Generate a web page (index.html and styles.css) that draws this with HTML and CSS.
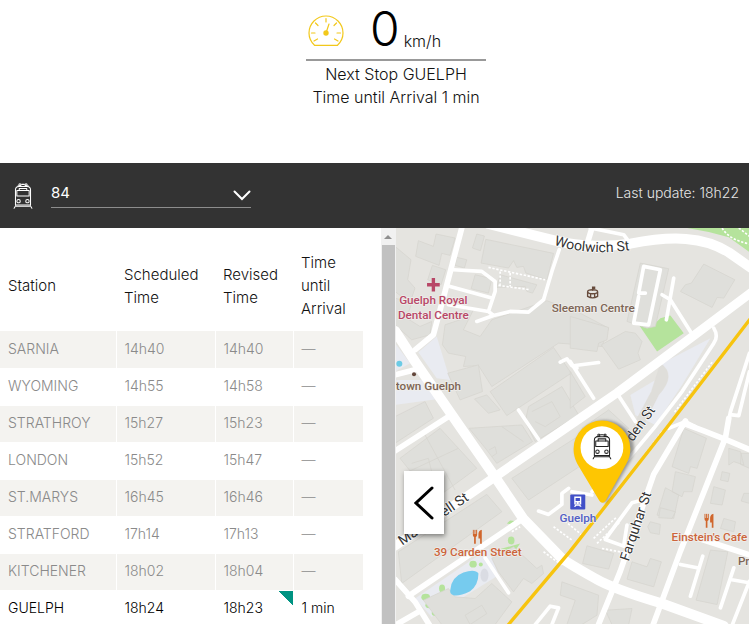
FILE: index.html
```html
<!DOCTYPE html>
<html lang="en">
<head>
<meta charset="utf-8">
<meta name="viewport" content="width=device-width, initial-scale=1">
<title>Train 84</title>
<link rel="stylesheet" href="styles.css">
</head>
<body>
<svg class="defs" aria-hidden="true">
  <symbol id="train" viewBox="0 0 56 76">
    <g fill="none" stroke="currentColor" stroke-width="3" stroke-linecap="round" stroke-linejoin="round">
      <path d="M13 9h9M24 4h8M34 9h10"/>
      <circle cx="19" cy="5" r="3"/><circle cx="37" cy="5" r="3"/>
      <path d="M6 64V20Q6 10 16 10H40Q50 10 50 20V64Z"/>
      <path d="M10 38V22H17V16H39V22H46V38Z"/>
      <path d="M17 22H39"/>
      <circle cx="15" cy="53" r="5"/><circle cx="41" cy="53" r="5"/>
      <path d="M9 68H47M7 66L2 74M49 66L54 74"/>
    </g>
  </symbol>
  <symbol id="fork" viewBox="0 0 30 44">
    <path fill="#d0662c" d="M1 1h3v13h2V1h3v13h2V1h3v16q0 5-4 6v20H5V23q-4-1-4-6ZM28 1v42h-5V27h-5V13Q19 2 28 1Z"/>
  </symbol>
</svg>

<header class="speed">
  <div class="speed-row">
    <svg class="gauge" viewBox="0 0 36 32" aria-hidden="true">
      <g fill="none" stroke="#f2c81b" stroke-width="1.2" stroke-linecap="round">
        <path d="M6.500 30.300Q1 25 1 18A17 17 0 0 1 35 18Q35 25 29.500 30.300Z"/>
        <path d="M18 3.500V7M7.500 8L10 10.500M28.500 8L26 10.500M3.500 18H7M29 18H32.500M6 26L9.500 24M30 26L26.500 24M18 18L21 9"/>
      </g>
      <circle cx="18" cy="18" r="2.700" fill="#f2c81b"/>
    </svg>
    <span class="speed-value">0</span>
    <span class="speed-unit">km/h</span>
  </div>
  <p>Next Stop GUELPH</p>
  <p>Time until Arrival 1 min</p>
</header>

<div class="bar">
  <svg class="bar-train" aria-hidden="true"><use href="#train"/></svg>
  <div class="picker">
    <select aria-label="Train number"><option>84</option></select>
    <svg class="chevron" viewBox="0 0 18 11" aria-hidden="true"><path d="M1.500 1.500L9 9L16.500 1.500" fill="none" stroke="#fff" stroke-width="2" stroke-linecap="round"/></svg>
  </div>
  <span class="updated">Last update: 18h22</span>
</div>

<main class="content">
  <section class="schedule">
    <table>
      <colgroup><col class="c-station"><col class="c-sched"><col class="c-rev"><col class="c-time"></colgroup>
      <thead><tr><th scope="col">Station</th><th scope="col">Scheduled Time</th><th scope="col">Revised Time</th><th scope="col">Time until Arrival</th></tr></thead>
      <tbody>
        <tr><td>SARNIA</td><td>14h40</td><td>14h40</td><td>—</td></tr>
        <tr><td>WYOMING</td><td>14h55</td><td>14h58</td><td>—</td></tr>
        <tr><td>STRATHROY</td><td>15h27</td><td>15h23</td><td>—</td></tr>
        <tr><td>LONDON</td><td>15h52</td><td>15h47</td><td>—</td></tr>
        <tr><td>ST.MARYS</td><td>16h45</td><td>16h46</td><td>—</td></tr>
        <tr><td>STRATFORD</td><td>17h14</td><td>17h13</td><td>—</td></tr>
        <tr><td>KITCHENER</td><td>18h02</td><td>18h04</td><td>—</td></tr>
        <tr class="next"><td>GUELPH</td><td>18h24</td><td class="early">18h23</td><td>1 min</td></tr>
      </tbody>
    </table>
  </section>
  <div class="scrollbar" aria-hidden="true"><span class="scroll-up"></span><span class="scroll-thumb"></span></div>

  <section class="map">
    <svg class="map-canvas" viewBox="3 0 1059 1188" preserveAspectRatio="xMinYMin slice" role="img" aria-label="Map of Guelph">
      <defs>
        <path id="p-woolwich" d="M476 50Q580 86 720 64"/>
        <path id="p-mac" d="M22 952L235 806"/>
        <path id="p-farq" d="M700 1000L784 750"/>
        <path id="p-carden" d="M712 642L790 534"/>
        <filter id="soft" x="-30%" y="-30%" width="160%" height="160%"><feGaussianBlur stdDeviation="5"/></filter>
      </defs>
      <rect width="1062" height="1188" fill="#e5e4e0"/>

      <g fill="#e9ebf1">
        <path d="M70 372L125 325L165 455L125 450ZM0 455L85 455L130 512L0 530ZM0 345L45 405L0 430Z"/>
        <path d="M800 405L945 330L860 470L780 590L720 560L705 500L780 455Z"/>
        <path d="M60 1110L280 960L310 1040L110 1165Z"/>
      </g>
      <path fill="#dfdeda" stroke="#e0ded9" d="M795 405Q845 440 790 500L745 590L700 640L725 570L768 490Z"/>

      <g fill="#b5e39c">
        <path d="M732 292L775 290L795 270L825 262L865 315L785 370Z"/>
        <path d="M875 0H1062V72L1000 28L940 12Z"/>
        <ellipse cx="348" cy="936" rx="10" ry="12"/><ellipse cx="234" cy="1007" rx="11" ry="10"/>
        <ellipse cx="141" cy="1080" rx="9" ry="12"/><ellipse cx="92" cy="1106" rx="13" ry="10"/>
        <ellipse cx="103" cy="1130" rx="12" ry="9"/><ellipse cx="121" cy="1153" rx="11" ry="9"/>
        <circle cx="118" cy="1110" r="5"/><circle cx="257" cy="1008" r="6"/><path d="M305 965L375 945L350 980ZM335 885L345 876L360 878L350 888Z"/>
      </g>

      <g fill="#dfdfdb" stroke="#d4d3cd" stroke-width="2">
        <path d="M70 38L115 55L123 18L180 30L165 82L140 76L132 112L62 85Z"/>
        <path d="M0 55L48 95L38 155L60 180L45 225L0 190ZM112 112L152 125L138 170L98 155Z"/>
        <path d="M245 18L268 24L256 68L232 60ZM272 34L475 76L455 155L392 135L385 115L365 118L355 98L340 120L258 105Z"/>
        <path d="M185 88L215 95L208 120L180 112ZM240 140L290 152L280 195L228 182ZM315 140L425 170L412 195L395 190L390 175L305 178Z"/>
        <path d="M0 210L50 225L35 270L75 295L110 280L105 320L50 335L0 290Z"/>
        <path d="M150 290L195 275L215 235L235 245L205 305L255 325L290 275L455 218L545 250L640 300L620 355L490 345L290 475L250 412L205 415L212 385L160 375L142 350Z"/>
        <path d="M158 435L250 410L262 490L195 515ZM285 490L475 358L528 435L335 562ZM238 512L275 500L315 545L280 555Z"/>
        <path d="M400 535L500 475L550 560L420 640L390 580ZM410 550L470 520L495 565L450 595L420 580"/>
        <path d="M525 265L640 298L635 335L610 345L605 370L525 360ZM618 350L690 310L720 315L740 340L728 375L735 395L670 423Z"/>
        <path d="M735 105L820 122L780 295L755 300L695 280ZM925 108L1018 155L985 210L965 208L950 238L855 190L870 170L888 165Z"/>
        <path d="M525 430L570 505L525 540ZM560 600L640 545L700 600L660 640L600 640Z"/>
        <path d="M0 565L90 520L115 570L0 645ZM15 690L135 600L245 720L115 815ZM90 620L180 785M40 730L190 660M50 705L100 690L110 730"/>
        <path d="M222 600L380 590L412 640L305 705L275 665ZM282 665L300 655L305 675L290 685M320 595L385 640"/>
        <path d="M350 750L555 620L590 690L400 815Z"/>
        <path d="M10 970L275 798L320 850L20 1065Z"/>
        <path d="M85 1115L160 1080L180 1105L240 1110L290 1065L350 1120L300 1188H140ZM210 1160L260 1130L275 1155L225 1188Z"/>
        <path d="M290 990L355 955L425 1020L440 1010L445 1035L410 1065L385 1050L355 1090L310 1030Z"/>
        <path d="M500 1060L610 1100L605 1160L560 1188H515L540 1115L495 1100Z"/>
        <path d="M865 600L933 630L905 720L885 715L880 735L830 715ZM840 730L900 745L890 790L865 790L860 805L830 790ZM810 778L850 800L835 870L785 860Z"/>
        <path d="M765 880L795 888L792 918L765 913L757 895ZM795 838L840 850L830 870L790 868Z"/>
        <path d="M575 952L655 975L640 1022L562 1005ZM710 1000L755 1015L765 990L798 1000L775 1075L695 1052Z"/>
        <path d="M945 965L997 970L965 1128L902 1115ZM980 730L1003 735L998 760L975 755ZM955 775L990 785L980 830L945 825Z"/>
        <path d="M1000 660L1035 670L1045 710L1015 700L1000 710ZM1037 675H1062V720L1035 708ZM1045 795H1062V825L1037 818ZM985 870L1020 880L1015 910L975 900Z"/>
        <path d="M630 1145L710 1140L700 1188H650Z"/>
      </g>

      <g fill="none" stroke="#fff" stroke-linejoin="round" stroke-linecap="round">
        <g stroke-width="30">
          <path d="M280 -12L480 38C560 58 650 55 705 47C830 22 925 25 1000 73L1070 122"/>
          <path d="M0 308L60 400L190 588L300 746L385 872L500 990Q525 1008 600 1050Q650 1080 800 1125L985 1192"/>
        </g>
        <path stroke-width="27" d="M0 953L300 745L525 590L665 494L885 330L1065 195"/>
        <g stroke-width="17">
          <path d="M200 0L150 190L115 320L60 365M0 440L60 425M40 1103L380 873M0 1053L60 1120L105 1192M0 1190L70 1150M0 668L160 565"/>
          <path d="M870 578L775 738L750 810L675 1028L608 1192M1000 570L990 628L855 968L772 1192M865 585L925 608L990 633L1065 665"/>
          <path d="M895 925L1065 980M575 50L590 0"/>
        </g>
        <g stroke-width="11">
          <path d="M175 125L260 130L300 160V190L280 250M165 175L290 210M160 230L280 250L295 262L245 280M295 262L345 250L400 252L445 215L470 130L492 65"/>
          <path d="M495 402L515 392L530 412L545 420M525 400L595 510M540 412L610 403M370 545L430 633M270 988L340 1093"/>
          <path d="M730 205L715 285L760 290L795 125L745 115L730 195H750M835 150L813 275M800 200L825 215L885 310M665 495L720 580"/>
          <path d="M955 300Q970 325 955 345L860 490L775 600L700 690L590 790"/>
          <path d="M585 0L685 20L700 40M995 600L1005 550L1062 375M1010 560L1030 562L1062 430"/>
          <path d="M730 818L710 823L630 933L685 953L695 890M855 1008L905 1018M922 983L885 1103M1015 1018L975 1138M1005 1053L1062 1063M1062 1058L1010 1190"/>
          <path d="M430 848L460 858L500 828V795L520 780M530 790L590 800M420 1188L465 1133L490 1138L470 1188M820 600L870 580L900 595"/>
        </g>
        <g stroke-width="5" stroke-dasharray="7 5" stroke-linecap="butt">
          <path d="M280 118L450 155M310 172L405 185M315 130V170M345 135V175M950 402L835 555M800 610L740 690"/>
          <path d="M445 970L500 1010M465 960L490 990M595 930L665 865M605 945L675 880M620 960L700 975M475 895L530 935M500 870L560 920M350 910L375 895"/>
          <path d="M980 0Q1000 35 1062 48M1030 0L1062 25"/>
        </g>
      </g>

      <path d="M1066 270L815 597L525 968L335 1194" fill="none" stroke="#f7c40f" stroke-width="10"/>
      <path d="M166 1082Q170 1045 205 1032Q240 1020 250 1035Q250 1070 225 1088Q190 1105 175 1100Q162 1095 166 1082Z" fill="#76cbee"/>
      <ellipse cx="268" cy="1040" rx="12" ry="20" fill="#dadce3"/>
      <circle cx="13" cy="407" r="9" fill="#6ccbe5"/>
      <circle cx="57" cy="438" r="6" fill="#63463a"/>

      <g class="street">
        <text><textPath href="#p-woolwich">Woolwich St</textPath></text>
        <text><textPath href="#p-mac">Macdonell St</textPath></text>
        <text><textPath href="#p-farq">Farquhar St</textPath></text>
        <text><textPath href="#p-carden">den St</textPath></text>
      </g>
      <path d="M115 150V190M96 170H134" stroke="#b84767" stroke-width="10"/>
      <g class="place">
        <g fill="#b84767"><text x="115" y="228">Guelph Royal</text><text x="115" y="272">Dental Centre</text></g>
        <g fill="#7d6556"><text x="594" y="253">Sleeman Centre</text><text x="100" y="485">town Guelph</text><text class="edge" x="1062" y="1010">Pr</text></g>
        <g fill="#cc653b"><text x="248" y="983">39 Carden Street</text><text x="942" y="937">Einstein's Cafe</text></g>
        <text x="548" y="882" fill="#5260c5">Guelph</text>
      </g>
      <g fill="none" stroke="#674b3c" stroke-width="4"><ellipse cx="592" cy="191" rx="15" ry="6"/><path d="M577 192V205Q592 214 607 205V192M586 198V208M598 198V208M592 188V177H598V181H592"/></g>
      <use href="#fork" x="232" y="903" width="30" height="44"/>
      <use href="#fork" x="926" y="855" width="30" height="44"/>
      <rect x="525" y="798" width="45" height="45" rx="3" fill="#4150c8"/>
      <path fill="#fff" fill-rule="evenodd" d="M537 804H558V828H537ZM541 809V818H554V809ZM541 822V825H545V822ZM550 822V825H554V822ZM536 835L540 829H555L559 835H554L552 832H543L541 835Z"/>

      <path filter="url(#soft)" opacity=".55" fill="#555" d="M631 825L557 706Q540 683 540 662A88 86 0 0 1 716 662Q716 683 698 710Z"/>
      <path fill="#fec602" d="M622 823Q614 823 609 812L546 706Q535 685 535 662A85 85 0 0 1 705 662Q705 685 693 706L634 812Q629 823 622 823Z"/>
      <circle cx="620" cy="658" r="64" fill="#fff"/>
      <use class="pin-train" href="#train" x="591" y="615" width="58" height="79"/>
    </svg>
    <button class="collapse" type="button" aria-label="Expand map">
      <svg viewBox="0 0 20 34" aria-hidden="true"><path d="M18 2L2 17L18 32" fill="none" stroke="#000" stroke-width="3" stroke-linecap="round"/></svg>
    </button>
  </section>
</main>
</body>
</html>
```
FILE: styles.css
```css
* { box-sizing: border-box; }

body {
  margin: 0;
  height: 100vh;
  display: flex;
  flex-direction: column;
  overflow: hidden;
  background: #fff;
  color: #111;
  font: 300 15px/23px Inter, "Open Sans", sans-serif;
}

.defs { display: none; }

.speed {
  padding: 0 0 54px 43px;
  text-align: center;
  font-size: 16px;
  display: flex;
  flex-direction: column;
  align-items: center;
}

.speed p { margin: 0; }

.speed-row {
  width: 180px;
  height: 61px;
  margin-bottom: 2px;
  padding: 0 2px 2px;
  display: flex;
  align-items: flex-end;
  border-bottom: 2px solid #999;
}

.gauge { width: 36px; height: 32px; margin: 0 26px 10px 0; }
.speed-value { font-size: 48px; line-height: 56px; color: #000; }
.speed-unit { margin: 0 0 4px 4px; }

.bar {
  flex: none;
  height: 65px;
  padding: 0 10px 0 13px;
  display: flex;
  align-items: center;
  background: #333;
  color: #fff;
}

.bar-train { width: 20px; height: 26px; margin-right: 18px; }

.picker {
  position: relative;
  width: 200px;
  height: 28px;
  margin-bottom: 4px;
  border-bottom: 1px solid #8d8d8d;
}

.picker select {
  width: 100%;
  height: 100%;
  padding: 0;
  border: 0;
  appearance: none;
  background: none;
  color: inherit;
  font: 400 15px/24px Inter, "Open Sans", sans-serif;
}

.chevron {
  position: absolute;
  right: 0;
  top: 10px;
  width: 18px;
  height: 11px;
  pointer-events: none;
}

.updated { margin: 0 0 6px auto; font-size: 14px; color: #e6e6e6; }

.content { flex: 1; min-height: 0; display: flex; }

.schedule { flex: 0 0 calc(50% + 6px); padding-right: 17px; overflow: hidden; }

table { width: 100%; table-layout: fixed; border-collapse: collapse; }
.c-station { width: 116px; }
.c-sched { width: 99px; }
.c-rev { width: 78px; }

th {
  height: 103px;
  padding: 12px 8px 0;
  text-align: left;
  font-weight: 300;
}

td {
  height: 37px;
  padding: 0 8px 2px;
  border-right: 1px solid #fff;
  border-bottom: 1px solid #fff;
  color: #8a8a8a;
  font-size: 14px;
}

tbody tr:nth-child(odd) { background: #f4f3f0; }
.next td { color: #000; }

.early {
  background: linear-gradient(45deg, transparent 50%, #009382 50%) right top / 15px 15px no-repeat;
}

.scrollbar {
  flex: none;
  width: 15px;
  padding: 0 1px;
  display: flex;
  flex-direction: column;
  background: #f1f1f1;
}

.scroll-up {
  width: 8px;
  margin: 7px auto 6px;
  border: 4px solid transparent;
  border-top-width: 0;
  border-bottom-color: #909090;
}

.scroll-thumb { flex: 1; background: #c1c1c1; }

.map { position: relative; flex: 1; min-width: 0; overflow: hidden; }
.map-canvas { display: block; width: 100%; height: 100%; }

.street text {
  font: 400 42px Roboto, sans-serif;
  fill: #333;
  stroke: #fff;
  stroke-width: 4px;
  paint-order: stroke;
}

.place text {
  font: 500 35px Roboto, sans-serif;
  text-anchor: middle;
  stroke: #f0efec;
  stroke-width: 4px;
  paint-order: stroke;
}

.place .edge { text-anchor: end; }
.pin-train { color: #222; }

.collapse {
  position: absolute;
  left: 8px;
  bottom: 90px;
  width: 40px;
  height: 63px;
  padding: 0;
  display: grid;
  place-items: center;
  border: 0;
  background: #fff;
  box-shadow: 1px 2px 5px rgba(0, 0, 0, .45);
}

.collapse svg { width: 20px; height: 34px; }
```
